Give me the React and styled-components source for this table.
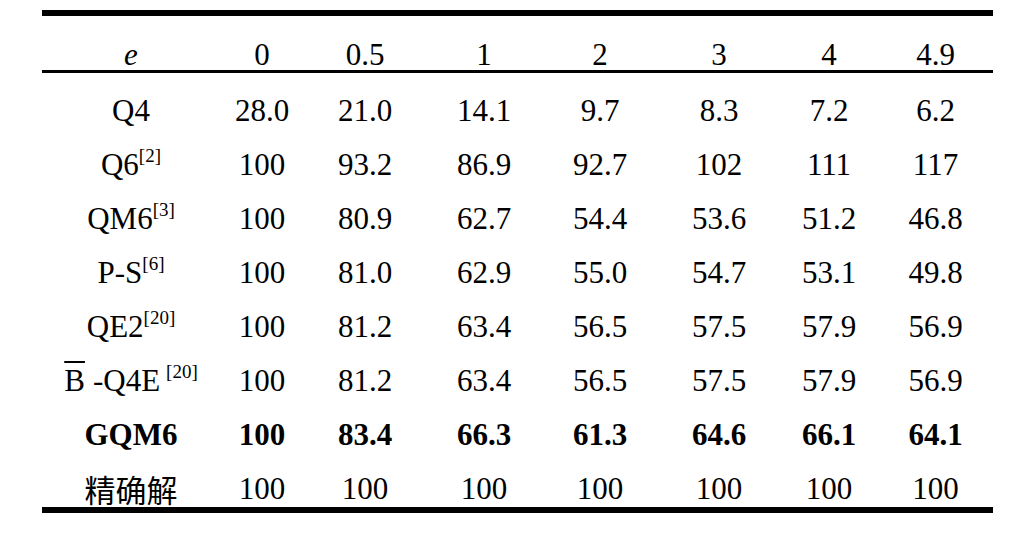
import React from "react";
import styled, { createGlobalStyle } from "styled-components";

const GlobalStyle = createGlobalStyle`
  html, body {
    margin: 0;
    padding: 0;
    background: #ffffff;
  }
  body {
    color: #000000;
    font-family: "Liberation Serif", "Times New Roman", Tinos, Times, serif;
  }
`;

const COLUMNS = "178px 84px 122px 116px 116px 122px 98px 115px";

const Page = styled.div`
  padding: 10px 0 0 42px;
`;

const Table = styled.div`
  width: 951px;
  border-top: 6px solid #000;
  border-bottom: 6px solid #000;
  padding-bottom: 2px;
`;

const Row = styled.div`
  display: grid;
  grid-template-columns: ${COLUMNS};
  height: ${(p) => (p.$header ? "57px" : "54px")};
  box-sizing: border-box;
  padding-top: ${(p) => (p.$header ? "24px" : "23px")};
  border-bottom: ${(p) => (p.$header ? "3px solid #000" : "none")};
`;

const Cell = styled.div`
  text-align: center;
  font-family: ${(p) =>
    p.$cjk
      ? '"Noto Sans CJK SC", "Noto Sans CJK JP", sans-serif'
      : '"Liberation Serif", "Times New Roman", Tinos, Times, serif'};
  font-size: 31px;
  line-height: 30px;
  white-space: nowrap;
  font-weight: ${(p) => (p.$bold ? 700 : 400)};
  font-style: ${(p) => (p.$italic ? "italic" : "normal")};
`;

const Sup = styled.span`
  font-size: 19px;
  line-height: 0;
  vertical-align: 13px;
  margin-left: ${(p) => (p.$gap ? "6px" : "0")};
`;

const Overlined = styled.span`
  text-decoration: overline;
  text-decoration-thickness: 2px;
  margin-right: 8px;
`;

const headers = ["0", "0.5", "1", "2", "3", "4", "4.9"];

const rows = [
  { label: "Q4", values: ["28.0", "21.0", "14.1", "9.7", "8.3", "7.2", "6.2"] },
  { label: "Q6", sup: "[2]", values: ["100", "93.2", "86.9", "92.7", "102", "111", "117"] },
  { label: "QM6", sup: "[3]", values: ["100", "80.9", "62.7", "54.4", "53.6", "51.2", "46.8"] },
  { label: "P-S", sup: "[6]", values: ["100", "81.0", "62.9", "55.0", "54.7", "53.1", "49.8"] },
  { label: "QE2", sup: "[20]", values: ["100", "81.2", "63.4", "56.5", "57.5", "57.9", "56.9"] },
  { label: "-Q4E", bar: "B", sup: "[20]", gap: true, values: ["100", "81.2", "63.4", "56.5", "57.5", "57.9", "56.9"] },
  { label: "GQM6", bold: true, values: ["100", "83.4", "66.3", "61.3", "64.6", "66.1", "64.1"] },
  { label: "精确解", cjk: true, values: ["100", "100", "100", "100", "100", "100", "100"] },
];

export default function App() {
  return (
    <>
      <GlobalStyle />
      <Page>
        <Table>
          <Row $header>
            <Cell $italic>e</Cell>
            {headers.map((h) => (
              <Cell key={h}>{h}</Cell>
            ))}
          </Row>
          {rows.map((r, i) => (
            <Row key={i}>
              <Cell $bold={r.bold} $cjk={r.cjk}>
                {r.bar && <Overlined>{r.bar}</Overlined>}
                {r.label}
                {r.sup && <Sup $gap={r.gap}>{r.sup}</Sup>}
              </Cell>
              {r.values.map((v, j) => (
                <Cell key={j} $bold={r.bold}>
                  {v}
                </Cell>
              ))}
            </Row>
          ))}
        </Table>
      </Page>
    </>
  );
}
